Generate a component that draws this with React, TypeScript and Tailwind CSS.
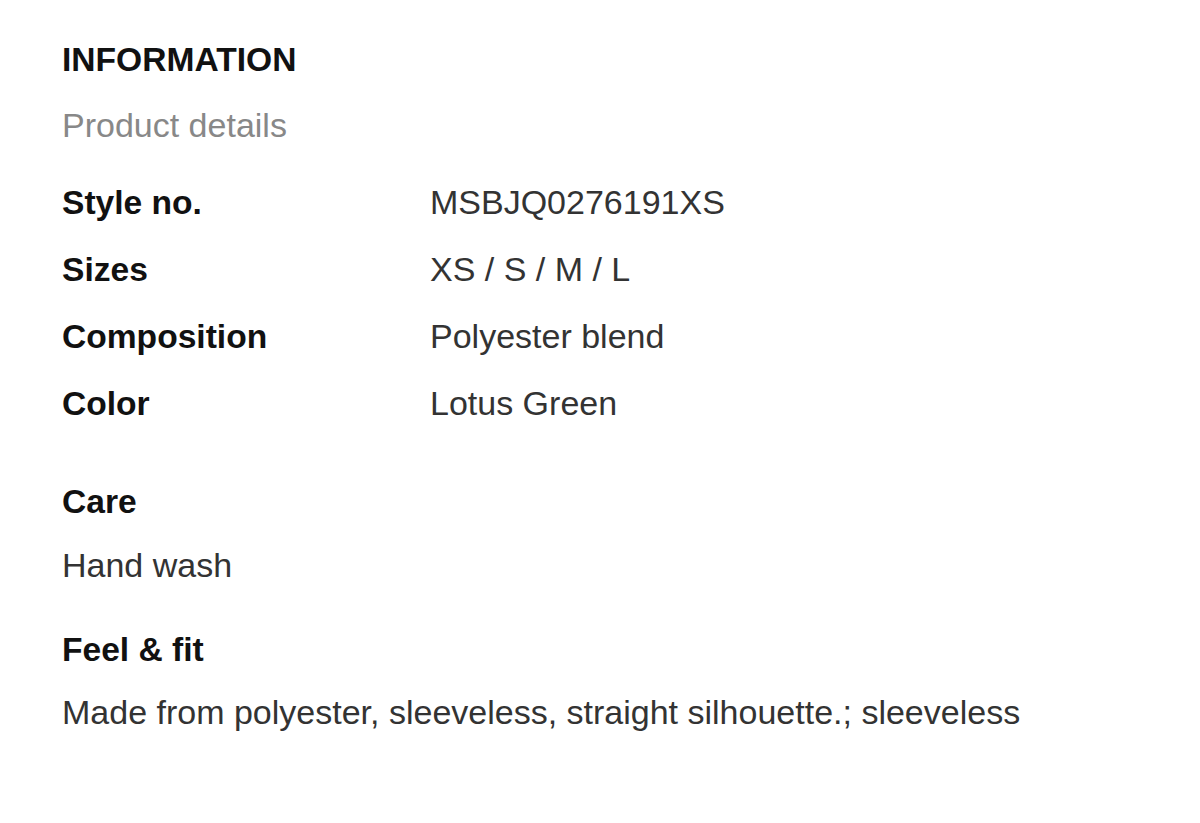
import React from 'react';

const specs = [
  { label: 'Style no.', value: 'MSBJQ0276191XS' },
  { label: 'Sizes', value: 'XS / S / M / L' },
  { label: 'Composition', value: 'Polyester blend' },
  { label: 'Color', value: 'Lotus Green' },
];

export default function App() {
  return (
    <div className="min-h-screen bg-white pl-[62px] pt-[41px] text-[34px] leading-[38px] font-['Liberation_Sans',Arial,sans-serif]">
      <h2 className="text-[33.6px] font-bold text-[#111]">INFORMATION</h2>
      <p className="mt-[27px] text-[#888]">Product details</p>

      <div className="mt-[39px] flex flex-col gap-[29px]">
        {specs.map(s => (
          <div key={s.label} className="grid h-[38px] grid-cols-[368px_1fr] items-baseline overflow-visible">
            <span className="text-[33.6px] font-bold text-[#111]">{s.label}</span>
            <span className="text-[#333]">{s.value}</span>
          </div>
        ))}
      </div>

      <h3 className="mt-[61px] text-[33.6px] font-bold text-[#111]">Care</h3>
      <p className="mt-[25px] text-[#333]">Hand wash</p>

      <h3 className="mt-[47px] text-[33.6px] font-bold text-[#111]">Feel &amp; fit</h3>
      <p className="mt-[24px] text-[#333]">Made from polyester, sleeveless, straight silhouette.; sleeveless</p>
    </div>
  );
}
